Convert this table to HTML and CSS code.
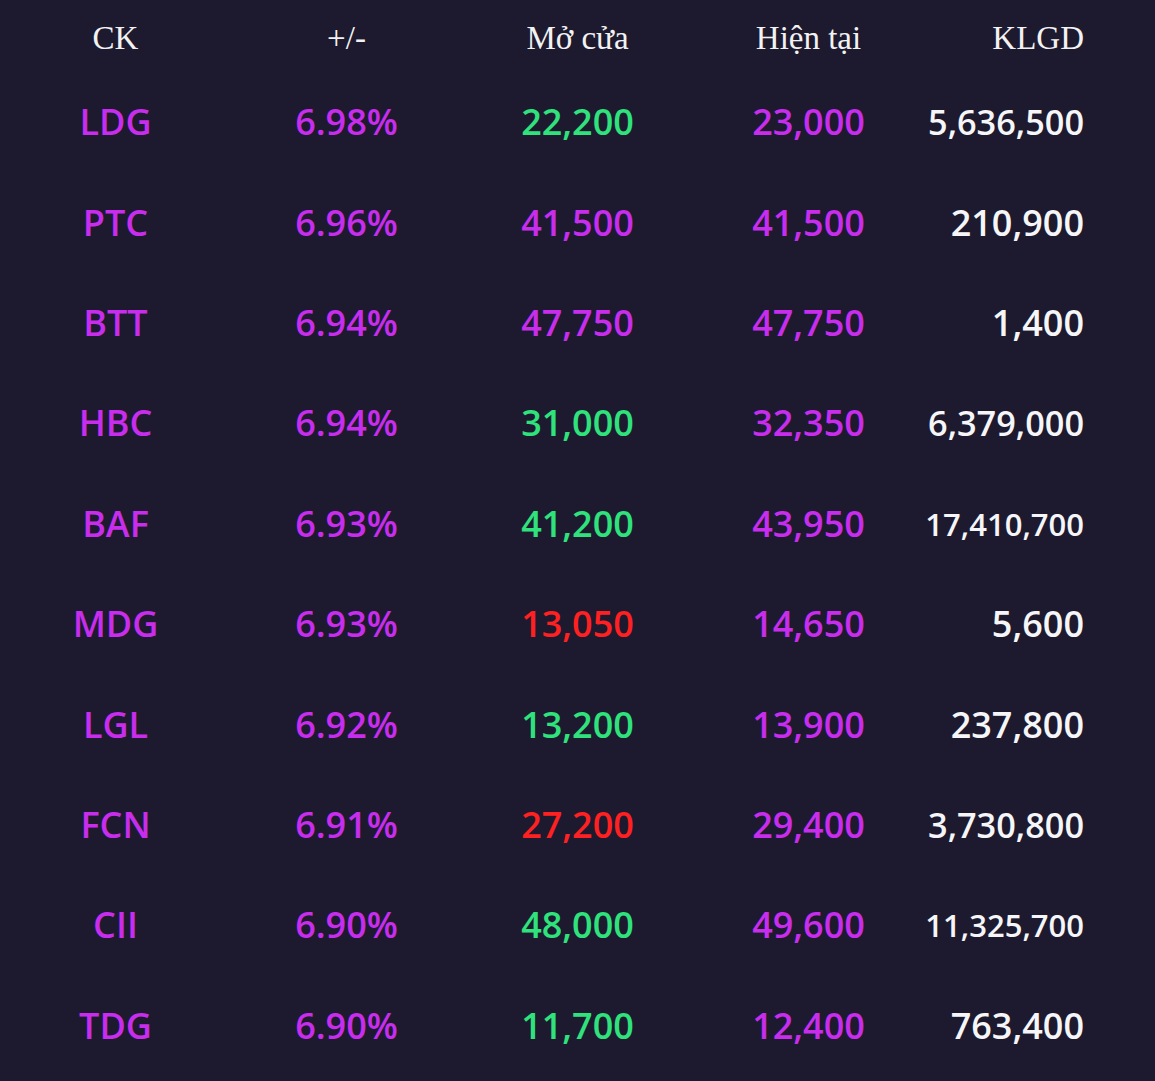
FILE: index.html
```html
<!DOCTYPE html>
<html lang="vi">
<head>
<meta charset="utf-8">
<title>Bảng giá</title>
<link rel="stylesheet" href="styles.css">
</head>
<body>
<div class="table">
  <div class="row head">
    <div class="cell">CK</div>
    <div class="cell">+/-</div>
    <div class="cell">Mở cửa</div>
    <div class="cell">Hiện tại</div>
    <div class="cell vol">KLGD</div>
  </div>
  <div class="row">
    <div class="cell up">LDG</div><div class="cell up">6.98%</div><div class="cell green">22,200</div><div class="cell up">23,000</div><div class="cell vol mid">5,636,500</div>
  </div>
  <div class="row">
    <div class="cell up">PTC</div><div class="cell up">6.96%</div><div class="cell up">41,500</div><div class="cell up">41,500</div><div class="cell vol">210,900</div>
  </div>
  <div class="row">
    <div class="cell up">BTT</div><div class="cell up">6.94%</div><div class="cell up">47,750</div><div class="cell up">47,750</div><div class="cell vol">1,400</div>
  </div>
  <div class="row">
    <div class="cell up">HBC</div><div class="cell up">6.94%</div><div class="cell green">31,000</div><div class="cell up">32,350</div><div class="cell vol mid">6,379,000</div>
  </div>
  <div class="row">
    <div class="cell up">BAF</div><div class="cell up">6.93%</div><div class="cell green">41,200</div><div class="cell up">43,950</div><div class="cell vol small">17,410,700</div>
  </div>
  <div class="row">
    <div class="cell up">MDG</div><div class="cell up">6.93%</div><div class="cell red">13,050</div><div class="cell up">14,650</div><div class="cell vol">5,600</div>
  </div>
  <div class="row">
    <div class="cell up">LGL</div><div class="cell up">6.92%</div><div class="cell green">13,200</div><div class="cell up">13,900</div><div class="cell vol">237,800</div>
  </div>
  <div class="row">
    <div class="cell up">FCN</div><div class="cell up">6.91%</div><div class="cell red">27,200</div><div class="cell up">29,400</div><div class="cell vol mid">3,730,800</div>
  </div>
  <div class="row">
    <div class="cell up">CII</div><div class="cell up">6.90%</div><div class="cell green">48,000</div><div class="cell up">49,600</div><div class="cell vol small">11,325,700</div>
  </div>
  <div class="row">
    <div class="cell up">TDG</div><div class="cell up">6.90%</div><div class="cell green">11,700</div><div class="cell up">12,400</div><div class="cell vol">763,400</div>
  </div>
</div>
</body>
</html>
```

FILE: styles.css
```css
html, body {
  margin: 0;
  padding: 0;
  background: #1d1a2f;
  height: 100%;
}
body {
  font-family: "Open Sans", "Noto Sans", sans-serif;
  color: #f6f6f8;
}
.table {
  width: 1155px;
  display: flex;
  flex-direction: column;
}
.row {
  display: grid;
  grid-template-columns: repeat(5, 231px);
  height: 100.4px;
  align-items: center;
  font-size: 36px;
  font-weight: 600;
}
.row.head {
  height: 72px;
  align-items: start;
  font-family: "Liberation Serif", "Times New Roman", serif;
  font-size: 33px;
  font-weight: 400;
  color: #f2f2f2;
}
.row.head .cell {
  padding-top: 18px;
  line-height: 40px;
}
.cell {
  text-align: center;
  line-height: 40px;
  white-space: nowrap;
}
.cell.vol {
  text-align: right;
  padding-right: 71px;
}
.cell.mid {
  font-size: 34.3px;
}
.cell.small {
  font-size: 31px;
}
.up { color: #c82ded; }
.green { color: #2fe27c; }
.red { color: #ff2121; }
```
